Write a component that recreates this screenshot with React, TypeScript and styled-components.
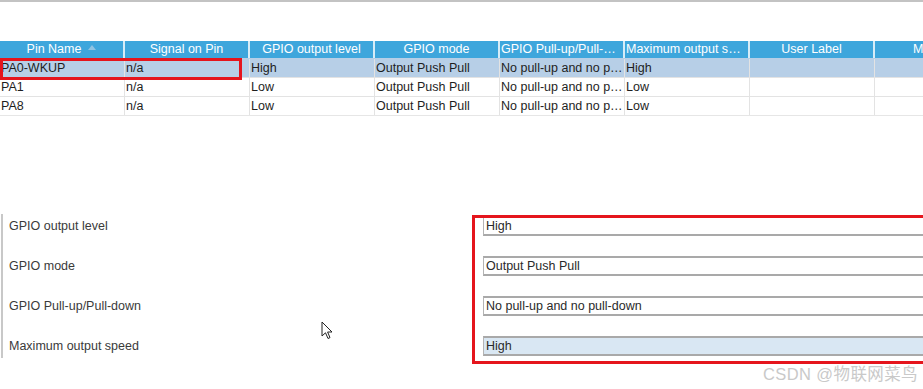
import React from "react";
import styled, { createGlobalStyle } from "styled-components";

const GlobalStyle = createGlobalStyle`
  html, body {
    margin: 0;
    padding: 0;
    background: #ffffff;
  }
  body {
    width: 923px;
    height: 389px;
    overflow: hidden;
    font-family: "Liberation Sans", Arial, sans-serif;
  }
  * {
    box-sizing: border-box;
  }
`;

const columns = [
  "Pin Name",
  "Signal on Pin",
  "GPIO output level",
  "GPIO mode",
  "GPIO Pull-up/Pull-down",
  "Maximum output speed",
  "User Label",
  "Modified",
];

const rows = [
  ["PA0-WKUP", "n/a", "High", "Output Push Pull", "No pull-up and no pull-down", "High", "", ""],
  ["PA1", "n/a", "Low", "Output Push Pull", "No pull-up and no pull-down", "Low", "", ""],
  ["PA8", "n/a", "Low", "Output Push Pull", "No pull-up and no pull-down", "Low", "", ""],
];

const fields = [
  { label: "GPIO output level", value: "High" },
  { label: "GPIO mode", value: "Output Push Pull" },
  { label: "GPIO Pull-up/Pull-down", value: "No pull-up and no pull-down" },
  { label: "Maximum output speed", value: "High", active: true },
];

export default function App() {
  return (
    <>
      <GlobalStyle />
      <Page>
        <TopRule />
        <TableArea>
          <Table>
            <HeaderRow>
              {columns.map((c, i) => (
                <HeaderCell key={c}>
                  {c}
                  {i === 0 && <SortArrow />}
                </HeaderCell>
              ))}
            </HeaderRow>
            {rows.map((r, ri) => (
              <Row key={ri} $selected={ri === 0}>
                {r.map((v, ci) => (
                  <Cell key={ci}>{v}</Cell>
                ))}
              </Row>
            ))}
          </Table>
          <RowMark />
        </TableArea>

        <Props>
          <Labels>
            {fields.map((f) => (
              <Label key={f.label}>{f.label}</Label>
            ))}
            <Cursor viewBox="0 0 12 19" width="12" height="19">
              <path
                d="M1 1 L1 15 L4.5 11.8 L7 17.5 L9 16.6 L6.6 11 L11 11 Z"
                fill="#fff"
                stroke="#222"
                strokeWidth="1"
                strokeLinejoin="round"
              />
            </Cursor>
          </Labels>
          <Values>
            {fields.map((f) => (
              <ValueBox key={f.label} $active={f.active}>
                {f.value}
              </ValueBox>
            ))}
          </Values>
        </Props>
        <Watermark>CSDN @物联网菜鸟</Watermark>
      </Page>
    </>
  );
}

const Page = styled.div`
  position: relative;
  width: 923px;
  height: 389px;
  overflow: hidden;
  background: #ffffff;
  color: #1e1e1e;
`;

const TopRule = styled.div`
  height: 2px;
  background: #c3c3c3;
`;

const TableArea = styled.div`
  position: relative;
  margin-top: 39px;
  width: 923px;
  overflow: hidden;
`;

const Table = styled.div`
  display: flex;
  flex-direction: column;
  width: 1000px;
  border-bottom: 1px solid #e6e6e6;
`;

const HeaderRow = styled.div`
  display: grid;
  grid-template-columns: repeat(8, 125px);
  height: 17px;
  background: #3ea6dc;
`;

const HeaderCell = styled.div`
  padding: 0 1px;
  border-right: 2px solid #d7ecf7;
  color: #ffffff;
  font-size: 12.5px;
  line-height: 17px;
  text-align: center;
  white-space: nowrap;
  overflow: hidden;
  text-overflow: ellipsis;
`;

const SortArrow = styled.span`
  display: inline-block;
  margin-left: 7px;
  width: 0;
  height: 0;
  border-left: 4px solid transparent;
  border-right: 4px solid transparent;
  border-bottom: 5px solid #8fc3e2;
  vertical-align: 3px;
`;

const Row = styled.div<{ $selected?: boolean }>`
  display: grid;
  grid-template-columns: repeat(8, 125px);
  height: 19px;
  background: ${(p) => (p.$selected ? "#b7cfe7" : "#ffffff")};
  border-top: 1px solid ${(p) => (p.$selected ? "#b7cfe7" : "#e3e3e3")};
`;

const Cell = styled.div`
  padding: 0 1px;
  border-right: 1px solid #e3e3e3;
  font-size: 12.5px;
  line-height: 18px;
  white-space: nowrap;
  overflow: hidden;
  text-overflow: ellipsis;
`;

const RowMark = styled.div`
  position: absolute;
  left: 0;
  top: 17px;
  width: 242px;
  height: 22px;
  border: 3px solid #e5151d;
  pointer-events: none;
`;

const Props = styled.div`
  display: grid;
  grid-template-columns: 472px 1fr;
  margin-top: 98px;
`;

const Labels = styled.div`
  position: relative;
  display: flex;
  flex-direction: column;
  gap: 20px;
  margin-left: 1px;
  padding: 2px 0 0 6px;
  height: 144px;
  border-left: 2px solid #c8c8c8;
`;

const Label = styled.div`
  height: 20px;
  font-size: 12.5px;
  line-height: 20px;
  color: #3a3a3a;
`;

const Cursor = styled.svg`
  position: absolute;
  left: 318px;
  top: 107px;
`;

const Values = styled.div`
  display: flex;
  flex-direction: column;
  gap: 20px;
  margin-top: 1px;
  width: 460px;
  height: 149px;
  border: 3px solid #e5151d;
  padding: 0 0 0 8px;
  overflow: hidden;
`;

const ValueBox = styled.div<{ $active?: boolean }>`
  height: 20px;
  border: 1px solid #b4b4b4;
  border-top: 2px solid #a9a9a9;
  border-bottom: 2px solid #a9a9a9;
  border-right: none;
  padding-left: 2px;
  background: ${(p) => (p.$active ? "#d9e7f3" : "#ffffff")};
  font-size: 12.5px;
  line-height: 16px;
  color: #2a2a2a;
  &:first-child {
    border-top: none;
    height: 18px;
  }
`;

const Watermark = styled.div`
  position: absolute;
  right: 5px;
  bottom: 5px;
  font-family: "Liberation Sans", "Noto Sans CJK SC", sans-serif;
  font-size: 16.5px;
  line-height: 20px;
  color: #c9c9c9;
  letter-spacing: 0.4px;
`;
